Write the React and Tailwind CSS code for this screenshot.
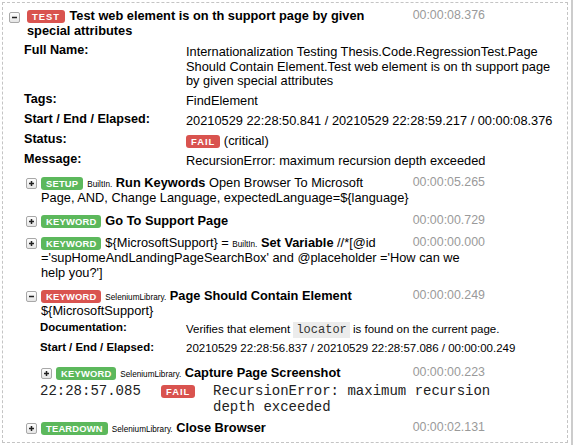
import React from "react";

function Toggle({ open, className }) {
  return (
    <svg width="11" height="11" viewBox="0 0 11 11" className={className}>
      <defs>
        <linearGradient id="tg" x1="0" y1="0" x2="0" y2="1">
          <stop offset="0" stopColor="#ffffff" />
          <stop offset="1" stopColor="#e4e4e4" />
        </linearGradient>
      </defs>
      <rect x="0.5" y="0.5" width="10" height="10" rx="1.5" fill="url(#tg)" stroke="#a8a8a8" />
      <rect x="3" y="4.75" width="5" height="1.5" fill="#222" />
      {!open && <rect x="4.75" y="3" width="1.5" height="5" fill="#222" />}
    </svg>
  );
}

function Badge({ red, spaced, children }) {
  return (
    <span
      className={
        "inline-block -my-[2px] rounded-[3px] px-[5px] py-[1px] font-['Liberation_Sans',Arial,sans-serif] text-[9.4px] leading-[11px] font-bold text-white " +
        (red ? "bg-[#d9534f] " : "bg-[#5cb85c] ") +
        (spaced ? "tracking-[1px]" : "tracking-[0.2px]")
      }
    >
      {children}
    </span>
  );
}

function Lib({ children }) {
  return <span className="text-[8.2px] leading-none">{children}</span>;
}

function Time({ children }) {
  return (
    <span className="float-right w-[95px] text-right text-[12.4px] leading-[15px] text-[#9a9a9a]">{children}</span>
  );
}

function Kw({ open, red, badge, time, children, body }) {
  return (
    <div className="ml-[15px]">
      <div className="relative pt-[4px] pb-[3.5px] pl-[23px] pr-[82px] text-[12.8px] leading-[15px]">
        <Toggle open={open} className="absolute left-[8px] top-[7px]" />
        <Time>{time}</Time>
        <Badge red={red}>{badge}</Badge>
        <span className="ml-[4px]">{children}</span>
      </div>
      {body}
    </div>
  );
}

function TRow({ label, children }) {
  return (
    <>
      <div className="pt-[0.5px] text-[12.6px] leading-[14.5px] font-bold">{label}</div>
      <div className="pt-[3px] pb-[2.5px] text-[12.8px] leading-[14.5px]">{children}</div>
    </>
  );
}

function KRow({ label, children }) {
  return (
    <>
      <div className="pt-[1px] text-[11.4px] leading-[13.5px] font-bold">{label}</div>
      <div className="pt-[2.5px] pb-[3.5px] text-[11.5px] leading-[13.5px]">{children}</div>
    </>
  );
}

export default function App() {
  return (
    <div className="w-[576px] h-[445px] overflow-hidden bg-white text-black font-['Liberation_Sans',Arial,sans-serif]">
      <div className="w-[573px] h-[445px] border-r-2 border-[#cccccc] pt-[2px] pl-[2px]">
        <div className="w-[566px] h-[441px] border border-dashed border-[#c4c4c4]">
          {/* Test header */}
          <div className="relative pt-[5px] pb-[4px] pl-[24px] pr-[82px] text-[12.8px] leading-[15px]">
            <Toggle open className="absolute left-[6px] top-[9px]" />
            <Time>00:00:08.376</Time>
            <Badge red spaced>TEST</Badge>
            <span className="ml-[4.5px] font-bold">
              Test web element is on th support page by given special attributes
            </span>
          </div>

          {/* Test metadata */}
          <div className="ml-[21px] pr-[4px] grid grid-cols-[162px_1fr]">
            <TRow label="Full Name:">
              Internationalization Testing Thesis.Code.RegressionTest.Page Should Contain Element.Test web element is on th support page by given special attributes
            </TRow>
            <TRow label="Tags:">FindElement</TRow>
            <TRow label="Start / End / Elapsed:">
              20210529 22:28:50.841 / 20210529 22:28:59.217 / 00:00:08.376
            </TRow>
            <TRow label="Status:">
              <Badge red spaced>FAIL</Badge> (critical)
            </TRow>
            <TRow label="Message:">RecursionError: maximum recursion depth exceeded</TRow>
          </div>

          {/* Children */}
          <Kw badge="SETUP" time="00:00:05.265">
            <Lib>BuiltIn.</Lib> <b>Run Keywords</b> Open Browser To Microsoft Page, AND, Change Language, {"expectedLanguage=${language}"}
          </Kw>

          <Kw badge="KEYWORD" time="00:00:00.729">
            <b>Go To Support Page</b>
          </Kw>

          <Kw badge="KEYWORD" time="00:00:00.000">
            {"${MicrosoftSupport} = "}
            <Lib>BuiltIn.</Lib> <b>Set Variable</b> //*[@id ='supHomeAndLandingPageSearchBox' and @placeholder ='How can we help you?']
          </Kw>

          <Kw
            open
            red
            badge="KEYWORD"
            time="00:00:00.249"
            body={
              <>
                <div className="ml-[22px] -mt-[1px] grid grid-cols-[146px_1fr]">
                  <KRow label="Documentation:">
                    Verifies that element{" "}
                    <code className="bg-[#ececec] px-[3px] py-[1px] font-['Liberation_Mono',monospace] text-[12px] leading-none text-[#333]">
                      locator
                    </code>{" "}
                    is found on the current page.
                  </KRow>
                  <KRow label="Start / End / Elapsed:">
                    20210529 22:28:56.837 / 20210529 22:28:57.086 / 00:00:00.249
                  </KRow>
                </div>
                <div className="mt-[2px]">
                  <Kw badge="KEYWORD" time="00:00:00.223">
                    <Lib>SeleniumLibrary.</Lib> <b>Capture Page Screenshot</b>
                  </Kw>
                </div>
                <div className="ml-[22px] -mt-[1px] flex font-['Liberation_Mono',monospace] text-[14px] leading-[16.5px] text-[#222]">
                  <div className="w-[121px] shrink-0">22:28:57.085</div>
                  <div className="flex w-[52px] shrink-0 items-start pt-[4px]">
                    <Badge red spaced>FAIL</Badge>
                  </div>
                  <div className="w-[300px]">RecursionError: maximum recursion depth exceeded</div>
                </div>
              </>
            }
          >
            <Lib>SeleniumLibrary.</Lib> <b>Page Should Contain Element</b> {"${MicrosoftSupport}"}
          </Kw>

          <Kw badge="TEARDOWN" time="00:00:02.131">
            <Lib>SeleniumLibrary.</Lib> <b>Close Browser</b>
          </Kw>
        </div>
      </div>
    </div>
  );
}
